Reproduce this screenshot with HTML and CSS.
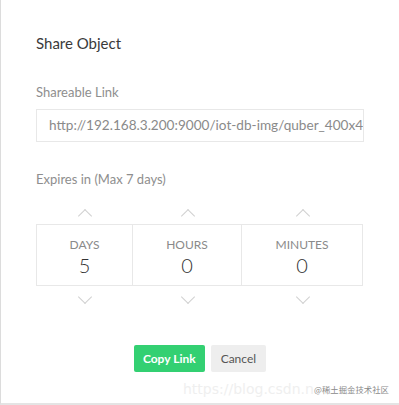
FILE: index.html
```html
<!DOCTYPE html>
<html lang="en">
<head>
  <meta charset="UTF-8">
  <title>Share Object</title>
  <link rel="stylesheet" href="styles.css">
</head>
<body>
  <div class="modal">
    <h3 class="title">Share Object</h3>

    <label class="label">Shareable Link</label>
    <div class="link-input">http://192.168.3.200:9000/iot-db-img/quber_400x400.png</div>

    <label class="label expires">Expires in (Max 7 days)</label>
    <div class="set-expire">
      <div class="expire-col">
        <span class="chevron up"></span>
        <div class="expire-cell"><span class="unit">DAYS</span><span class="value">5</span></div>
        <span class="chevron down"></span>
      </div>
      <div class="expire-col">
        <span class="chevron up"></span>
        <div class="expire-cell"><span class="unit">HOURS</span><span class="value">0</span></div>
        <span class="chevron down"></span>
      </div>
      <div class="expire-col">
        <span class="chevron up"></span>
        <div class="expire-cell"><span class="unit">MINUTES</span><span class="value">0</span></div>
        <span class="chevron down"></span>
      </div>
    </div>

    <div class="actions">
      <button class="btn btn-success">Copy Link</button>
      <button class="btn btn-link">Cancel</button>
    </div>

    <div class="watermark"><span class="wm-url">https://blog.csdn.n</span><span class="wm-tag">@稀土掘金技术社区</span></div>
  </div>
</body>
</html>
```

FILE: styles.css
```css
body { margin: 0; background: #fff; font-family: Lato, "Open Sans", sans-serif; color: #333; }

.modal { width: 399px; height: 405px; box-sizing: border-box; border-left: 1px solid #dcdcdc; border-bottom: 2px solid #e4e4e4; padding: 33px 35px 0 35px; position: relative; overflow: hidden; }

.title { margin: 0; font-size: 15px; font-weight: 400; color: #3a3a3a; line-height: 20px; }

.label { display: block; margin-top: 30px; font-size: 13px; color: #8e8e8e; line-height: 18px; }
.label.expires { margin-top: 28px; }

.link-input { margin-top: 8px; height: 33px; box-sizing: border-box; border: 1px solid #e8e8e8; padding: 0 12px; font-size: 13.6px; line-height: 31px; color: #8a8a8a; white-space: nowrap; overflow: hidden; }

.set-expire { display: grid; grid-template-columns: 97px 109px 121px; margin-top: 9px; }
.expire-col { display: flex; flex-direction: column; align-items: center; }

.chevron { display: block; width: 9px; height: 9px; border-left: 1px solid #d0d0d0; border-top: 1px solid #d0d0d0; }
.chevron.up { transform: rotate(45deg); margin: 14px 0 3px; }
.chevron.down { transform: rotate(225deg); margin: 6px 0 0; }

.expire-cell { align-self: stretch; height: 62px; box-sizing: border-box; border: 1px solid #e8e8e8; border-left: none; display: flex; flex-direction: column; align-items: center; padding-top: 12px; }
.expire-col:first-child .expire-cell { border-left: 1px solid #e8e8e8; }
.unit { font-size: 12px; color: #8a8a8a; line-height: 16px; }
.value { font-size: 20px; color: #333; line-height: 24px; font-weight: 300; }

.actions { display: flex; justify-content: center; gap: 6px; margin-top: 43px; }
.btn { border: none; border-radius: 2px; height: 27px; font-family: inherit; font-size: 12px; padding: 0 10px; cursor: pointer; }
.btn-success { background: #33d072; color: #fff; font-weight: 700; padding: 0 9px; }
.btn-link { background: #eeeeee; color: #555; }

.watermark { position: absolute; left: 182px; top: 378px; width: 216px; white-space: nowrap; }
.wm-url { font-family: "DejaVu Sans", sans-serif; font-size: 14px; color: #efefef; }
.wm-tag { position: absolute; left: 131px; top: 5px; font-family: "Noto Sans CJK SC", sans-serif; font-size: 8.4px; color: #8a8a8a; }
```
